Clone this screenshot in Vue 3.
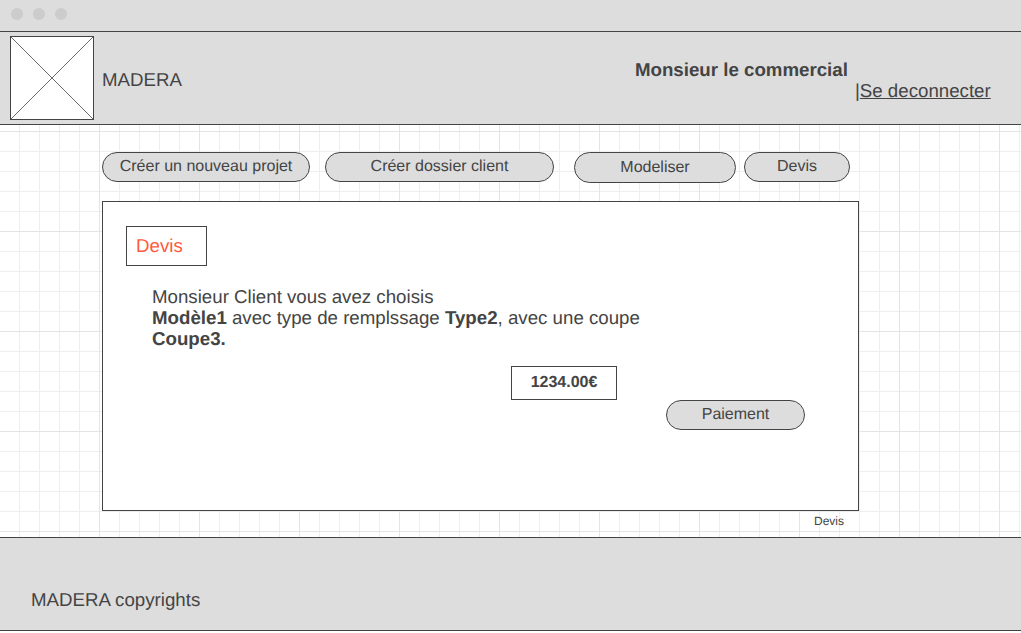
<template>
  <div class="page">
    <div class="titlebar">
      <span class="dot"></span><span class="dot"></span><span class="dot"></span>
    </div>
    <header class="header">
      <svg class="logo" width="84" height="84" viewBox="0 0 84 84">
        <rect x="0.5" y="0.5" width="83" height="83" fill="#fff" stroke="#444" />
        <path d="M1 1L83 83M83 1L1 83" stroke="#444" stroke-width="0.8" fill="none" />
      </svg>
      <span class="brand">MADERA</span>
      <div class="user">
        <strong class="user-name">Monsieur le commercial</strong>
        <div class="logout">|<a class="logout-link">Se deconnecter</a></div>
      </div>
    </header>
    <main class="main">
      <nav class="nav">
        <button class="pill nav-new">Créer un nouveau projet</button>
        <button class="pill nav-client">Créer dossier client</button>
        <button class="pill nav-model">Modeliser</button>
        <button class="pill nav-devis">Devis</button>
      </nav>
      <section class="panel">
        <div class="tab">Devis</div>
        <p class="summary">Monsieur Client vous avez choisis<br /><b>Modèle1</b> avec type de remplssage <b>Type2</b>, avec une coupe<br /><b>Coupe3.</b></p>
        <div class="price">1234.00€</div>
        <button class="pill pay">Paiement</button>
      </section>
      <div class="caption">Devis</div>
    </main>
    <footer class="footer">MADERA copyrights</footer>
  </div>
</template>

<script setup>
</script>

<style>
html, body { margin: 0; padding: 0; background: #fff; }
</style>

<style scoped>
.page {
  width: 1021px;
  height: 633px;
  overflow: hidden;
  position: relative;
  font-family: "Liberation Sans", Arial, sans-serif;
  color: #444;
  text-rendering: geometricPrecision;
}
.titlebar {
  height: 31px;
  box-sizing: content-box;
  background: #ddd;
  border-bottom: 1px solid #444;
  display: flex;
  align-items: center;
  gap: 10px;
  padding-left: 11px;
  padding-bottom: 0;
}
.dot {
  width: 12px;
  height: 12px;
  margin-top: -3px;
  border-radius: 50%;
  background: #ccc;
}
.header {
  height: 92px;
  background: #ddd;
  border-bottom: 1px solid #444;
  display: flex;
  align-items: flex-start;
  padding: 4px 0 0 10px;
  box-sizing: border-box;
  height: 93px;
}
.logo { display: block; flex: none; }
.brand {
  margin: 34px 0 0 8px;
  font-size: 18.7px;
  line-height: 20px;
}
.user {
  position: relative;
  margin-left: 453px;
  width: 360px;
  font-size: 18.7px;
}
.user-name {
  display: block;
  margin-top: 24px;
  line-height: 20px;
  white-space: nowrap;
}
.logout {
  margin: 1px 0 0 220px;
  line-height: 20px;
  white-space: nowrap;
}
.logout-link { text-decoration: underline; }
.main {
  height: 412px;
  box-sizing: border-box;
  padding: 27px 0 0 102px;
  background-color: #fff;
  background-image:
    linear-gradient(to right, transparent 99px, #e4e4e4 99px, #e4e4e4 100px, transparent 100px),
    linear-gradient(to bottom, transparent 99px, #e4e4e4 99px, #e4e4e4 100px, transparent 100px),
    linear-gradient(to right, transparent 19px, #eee 19px, #eee 20px, transparent 20px),
    linear-gradient(to bottom, transparent 19px, #eee 19px, #eee 20px, transparent 20px);
  background-size: 100px 100px, 100px 100px, 20px 20px, 20px 20px;
  background-position: 0 7px;
}
.nav {
  display: flex;
  align-items: flex-start;
  height: 49px;
}
.pill {
  display: block;
  box-sizing: border-box;
  padding: 0;
  height: 30px;
  background: #ddd;
  border: 1px solid #444;
  border-radius: 15px;
  color: #444;
  font-family: inherit;
  font-size: 16px;
  text-rendering: inherit;
}
.nav-new { width: 208px; }
.nav-client { width: 229px; margin-left: 15px; }
.nav-model { width: 162px; height: 31px; border-radius: 15.5px; margin-left: 20px; }
.nav-devis { width: 106px; margin-left: 8px; }
.panel {
  width: 757px;
  height: 310px;
  box-sizing: border-box;
  background: #fff;
  border: 1px solid #444;
  padding: 24px 0 0 23px;
}
.tab {
  width: 81px;
  height: 40px;
  box-sizing: border-box;
  border: 1px solid #444;
  padding-left: 9px;
  font-size: 18.7px;
  line-height: 38px;
  color: #ff5a3c;
}
.summary {
  margin: 20px 0 0 26px;
  width: 520px;
  font-size: 18.7px;
  line-height: 21px;
  white-space: nowrap;
}
.price {
  width: 106px;
  height: 34px;
  box-sizing: border-box;
  margin: 17px 0 0 385px;
  border: 1px solid #444;
  font-size: 16px;
  font-weight: 700;
  line-height: 31px;
  text-align: center;
}
.pay {
  width: 139px;
  margin-left: 540px;
}
.caption {
  width: 757px;
  padding-right: 15px;
  box-sizing: border-box;
  margin-top: 3px;
  text-align: right;
  font-size: 12px;
  line-height: 14px;
}
.footer {
  height: 94px;
  box-sizing: border-box;
  background: #ddd;
  border-top: 1px solid #444;
  border-bottom: 1px solid #444;
  padding: 52px 0 0 31px;
  font-size: 18.7px;
  line-height: 20px;
}
</style>
